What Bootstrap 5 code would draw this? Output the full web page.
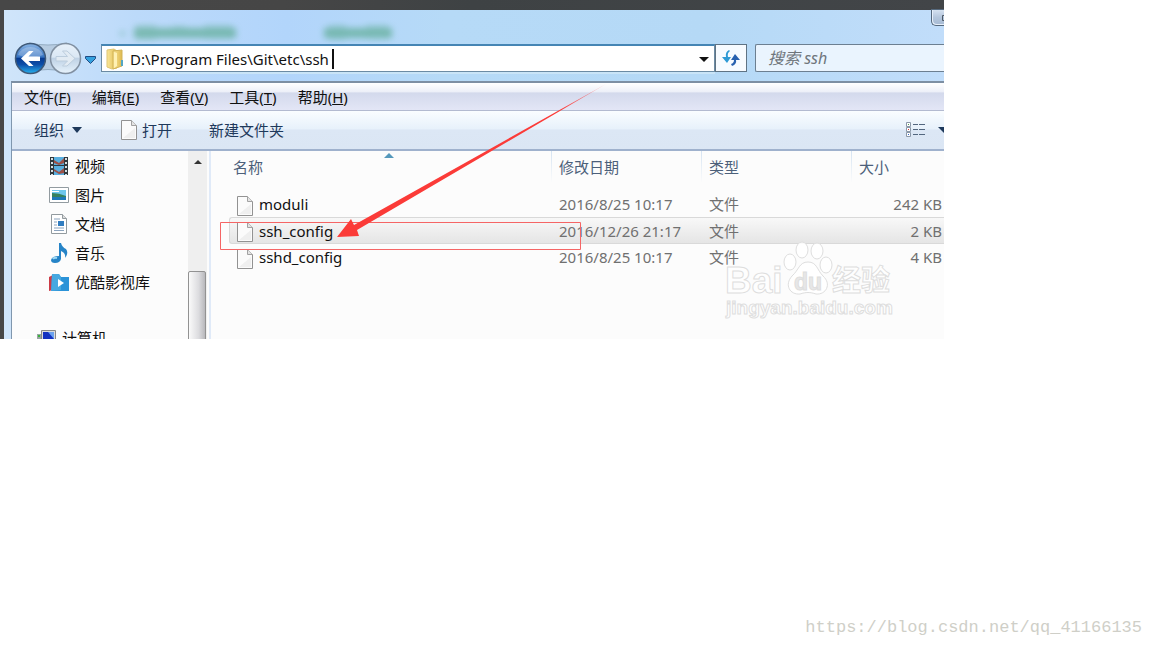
<!DOCTYPE html>
<html lang="zh-CN">
<head>
<meta charset="utf-8">
<meta name="viewport" content="width=device-width, initial-scale=1">
<title>ssh</title>
<link href="https://cdn.jsdelivr.net/npm/bootstrap@5.3.0/dist/css/bootstrap.min.css" rel="stylesheet">
<script src="https://cdn.jsdelivr.net/npm/bootstrap@5.3.0/dist/js/bootstrap.bundle.min.js"></script>
<style>
body{font:15px/22px "Noto Sans","Noto Sans CJK SC",sans-serif;background:#fff;color:#111}
button,input{font:inherit;color:inherit}
.desk{margin-right:208px;padding:10px 0 0 4px;background:linear-gradient(90deg,#474747,#464646 30%,#3e4244 50%,#424548)}
.glass{padding-left:7px;background:linear-gradient(90deg,#d0e5fa,#bcdafa 14%,#b2d5fb 30%,#b6daf7 47%,#b5d9f6 75%,#c1ddfa)}
.titlebar{height:34px}
.ghosttext{left:110px;top:10px}
.captionbtn{right:0;top:-1px;width:13px;height:17px;border:1px solid #56697d;border-right:0;border-radius:0 0 0 5px;background:linear-gradient(#d5e1f0,#b4c6dc 50%,#a6bad4);box-shadow:inset 1px -1px #e6effa}
.plain{border:0;background:none;padding:0;white-space:nowrap}
.history{width:90px;height:28px}
.address{height:28px;border:1px solid #6b8ba4;border-top:2px solid #4585b4;background:#fff;box-shadow:0 2px #c9e4f7}
.address input,.find input{border:0;background:none;outline:0;min-width:0}
.caret{left:230px;top:3px;width:2px;height:20px;background:#111}
.refresh{width:32px;height:28px;border:1px solid #5f7384;background:#f7fbff}
.find{width:189px;height:28px;margin-left:8px;border:1px solid #6c7f91;border-right:0;border-radius:2px 0 0 2px;background:#eaf4fe;font-size:16px}
.find input::placeholder{color:#6e757b;font-style:italic;opacity:1}
.frame{margin-top:9px;border-left:1px solid #8097ae;border-top:2px solid #7d8fa3;background:#fcfcfc}
.menus{height:28px;padding-left:12px;gap:21px;background:linear-gradient(#fff,#eceff8 34%,#d3d9ec 36%,#e3e6f6);border-bottom:1px solid #b3bad0}
.tools{height:40px;padding-left:22px;color:#1e395b;background:linear-gradient(#fafdff,#e7f1fb 47%,#dce7f5 50%,#dbe6f4);border-bottom:2px solid #9fb1cd}
.opener{margin-left:38px}
.newdir{margin-left:37px}
.panes{height:188px}
.tree{width:176px;overflow:hidden}
.tree a{height:29px;color:#111;padding-left:37px;gap:6px;white-space:nowrap}
.tree .root{padding-left:24px;margin-top:27px}
.track{width:19px;background:#efefef}
.thumb{top:120px;bottom:-4px;left:0;right:1px;border:1px solid #929292;border-radius:2px;background:linear-gradient(90deg,#fafafa,#dcdcdf 60%,#b8b8bc)}
.divide{width:4px;border-right:2px solid #e0eaf8}
.listing{padding-left:18px;min-width:0}
.files{width:100%;table-layout:fixed;border-collapse:separate;border-spacing:0;white-space:nowrap;color:#707070}
.files th{height:40px;padding:5px 0 0 8px;vertical-align:top;font-weight:400;color:#4c607a;background:linear-gradient(#d5e3f2,#fcfcfc) left top/1px 32px no-repeat}
.files th:first-child{background:none;padding-left:4px}
.files td{height:26px;padding:0 2px 0 8px;line-height:24px}
.files td:first-child{color:#111;padding-left:7px}
.files td svg{margin-right:5px}
.files .picked td{height:27px;border:solid #d9d9d9;border-width:1px 0;background:linear-gradient(#f8f8f8,#e5e5e5)}
.files .picked td:first-child{border-left-width:1px;border-radius:3px 0 0 3px;padding-left:6px}
.sorted{left:155px;top:1px}
.baidu{right:42px;top:86px}
.notes{left:0;top:0;pointer-events:none}
.credit{right:10px;bottom:9px;font:17px/22px "Liberation Mono",monospace;color:#cfcfc8}
</style>
</head>
<body class="position-relative min-vh-100">
<svg class="position-absolute" width="0" height="0"><defs>
<symbol id="page" viewBox="0 0 18 20"><path d="M1.500.500h10l5 5v14h-15z" fill="#fbfbfb" stroke="#929292"/><path d="M3 18h12V8z" fill="#efefef"/><path d="M11.500.500v5h5" fill="#e4e4e4" stroke="#a2a2a2"/></symbol>
<linearGradient id="orb" x2="0" y2="1"><stop stop-color="#8bb5e4"/><stop offset=".45" stop-color="#3572c1"/><stop offset=".5" stop-color="#073b91"/><stop offset=".7" stop-color="#0d4ea8"/><stop offset="1" stop-color="#27b2ef"/></linearGradient>
<linearGradient id="orb2" x2="0" y2="1"><stop stop-color="#e8f1fa"/><stop offset=".45" stop-color="#dbe8f4"/><stop offset=".5" stop-color="#bfd2e5"/><stop offset="1" stop-color="#e7f3fc"/></linearGradient>
<linearGradient id="fade" gradientUnits="userSpaceOnUse" x1="605" y1="0" x2="560" y2="0"><stop stop-color="#ff3a3a" stop-opacity=".35"/><stop offset="1" stop-color="#fb3b38"/></linearGradient>
<linearGradient id="gold" x2="1"><stop stop-color="#f9e698"/><stop offset="1" stop-color="#dfb94e"/></linearGradient>
</defs></svg>
<main class="desk"><div class="glass position-relative">
  <div class="titlebar">
    <svg class="ghosttext position-absolute" width="290" height="26" aria-hidden="true"><g fill="#5eac94" opacity=".7" style="filter:blur(3px)"><path d="M6 12h5v3H6zM20 8h102v10H20zM210 8h68v10h-68z"/><path d="M22 5h20v15H22zM58 6h14v12H58zM90 5h28v14H90zM215 5h17v15h-17zM252 5h22v14h-22z" opacity=".5"/></g></svg>
    <div class="captionbtn position-absolute"><svg class="d-block" width="12" height="14"><path d="M10.500 5.500h5v5h-5z" fill="none" stroke="#4d5966"/></svg></div>
  </div>
  <div class="d-flex align-items-center">
    <div class="history d-flex align-items-center flex-shrink-0">
      <svg width="90" height="34" viewBox="0 0 90 34" role="img" aria-label="后退 前进"><path d="M18 2q19 4 38 0l12 15-12 14q-19-5-38 0z" fill="#b7cce1" stroke="#94acc2"/><circle cx="19.500" cy="17.500" r="15" fill="url(#orb)" stroke="#3f5978" stroke-width="1.500"/><path d="M7 14a13 11 0 0 1 25 0q-12 5-25 0z" fill="#fff" opacity=".25"/><path d="M10 17.500l8-7.500h4.500l-5 5.500H29v4.500H17.500l5 5H18z" fill="#fff"/><circle cx="54.500" cy="17.500" r="15" fill="url(#orb2)" stroke="#8190a1" stroke-width="1.500"/><path d="M64 17.500l-8-7.500h-4.500l5 5.500H45v4.500h11.500l-5 5H56z" fill="#e2ebf3" stroke="#bccddd"/><path d="M74.500 15.500h10v2l-5 5-5-5z" fill="#33a0de" stroke="#214b83"/></svg>
    </div>
    <div class="address position-relative d-flex align-items-center flex-grow-1">
      <svg width="20" height="22" class="flex-shrink-0 ms-1" viewBox="0 0 20 22"><path d="M1 2l7-1 3 2v17l-5 1-5-2z" fill="url(#gold)" stroke="#dfc575"/><path d="M7 3l9-1v16l-9 3z" fill="url(#gold)" stroke="#d3b458"/><path d="M8 4l3 1v13l-3 2z" fill="#fff1b4"/><path d="M15 12h2v6h-2z" fill="#53a6c4"/></svg>
      <input class="flex-grow-1 p-0 ms-1" aria-label="地址" value="D:\Program Files\Git\etc\ssh">
      <span class="caret position-absolute"></span>
      <button class="plain d-flex me-1" aria-label="历史"><svg width="12" height="8"><path d="M1 2h10L6 7z" fill="#111"/></svg></button>
    </div>
    <button class="refresh p-0 d-flex align-items-center justify-content-center" aria-label="刷新"><svg width="20" height="20"><path d="M8 2Q4 4 5 9H1l5 6 4-6H7Q6 5 9 3z" fill="#2e9ad5"/><path d="M11 18q5-2 4-6h4l-5-6-4 6h3q0 3-3 4z" fill="#2861af"/></svg></button>
    <label class="find d-flex align-items-center flex-shrink-0"><input class="w-100 ps-2 ms-1" aria-label="搜索" placeholder="搜索 ssh"></label>
  </div>
  <div class="frame">
    <nav class="menus d-flex align-items-center">
      <button class="plain">文件(<u>F</u>)</button><button class="plain">编辑(<u>E</u>)</button><button class="plain">查看(<u>V</u>)</button><button class="plain">工具(<u>T</u>)</button><button class="plain">帮助(<u>H</u>)</button>
    </nav>
    <div class="tools d-flex align-items-center">
      <button class="plain d-flex align-items-center gap-2">组织<svg width="10" height="6"><path d="M0 0h10L5 6z" fill="#1e395b"/></svg></button>
      <button class="opener plain d-flex align-items-center gap-1"><svg width="18" height="20"><use href="#page"/></svg>打开</button>
      <button class="newdir plain me-auto">新建文件夹</button>
      <button class="plain d-flex" aria-label="更改视图"><svg width="40" height="18"><g fill="#fff" stroke="#8b98a9"><path d="M2.500 1.500h4v4h-4zM2.500 6.500h4v4h-4zM2.500 11.500h4v4h-4z"/></g><path d="M4 3h1v1H4z" fill="#4b9a4b"/><path d="M4 8h1v1H4z" fill="#d33"/><path d="M4 13h1v1H4z" fill="#36c"/><path d="M9 3.500h5m1 0h6M9 8.500h5m1 0h6M9 13.500h5m1 0h6" stroke="#53677f"/><path d="M34 6h12l-6 6z" fill="#1e395b"/></svg></button>
    </div>
    <div class="panes d-flex overflow-hidden">
      <nav class="tree flex-shrink-0">
        <a href="#" class="d-flex align-items-center text-decoration-none"><svg width="20" height="20"><path d="M1 1h18v18H1z" fill="#30383d"/><path d="M5 1h10v8H5zM5 10h10v9H5z" fill="#58afe0"/><path d="M5 4l5 3 5-5v5l-5 2-5-2zM5 13l5 3 5-4v5l-5 1-5-3z" fill="#9c5148"/><path d="M3 2v17M17 2v17" stroke="#d5e0e5" stroke-width="2" stroke-dasharray="2 2"/></svg>视频</a>
        <a href="#" class="d-flex align-items-center text-decoration-none"><svg width="20" height="20"><path d="M.5 2.500h19v15H.5z" fill="#fff" stroke="#929ba0"/><path d="M3 5h14v10H3z" fill="#6cc6ec"/><path d="M3 8q7 0 14 3v1H3z" fill="#35805d"/><path d="M3 12h14v3H3z" fill="#1c78b7"/><path d="M3 6h7v1H3z" fill="#fff"/></svg>图片</a>
        <a href="#" class="d-flex align-items-center text-decoration-none"><svg width="20" height="20"><path d="M2.500.500h11l4 4v15h-15z" fill="#fff" stroke="#939b9f"/><path d="M13.500.500v4h4" fill="#ddd" stroke="#939b9f"/><path d="M5 5h6M5 8h3M5 11h3M5 14h10M5 16.500h10" stroke="#8ba3bd"/><path d="M9 7h6v5H9z" fill="#317dc0"/></svg>文档</a>
        <a href="#" class="d-flex align-items-center text-decoration-none"><svg width="20" height="20"><path d="M10 0h2q1 4 5 6 3 4-1 9 1-5-4-7v8q-1 4-6 4-4 0-4-3 1-4 8-4z" fill="#2684c7"/><path d="M4 16q1-2 4-1" stroke="#9dd9f5" stroke-width="2" fill="none"/></svg>音乐</a>
        <a href="#" class="d-flex align-items-center text-decoration-none"><svg width="20" height="20"><path d="M0 5l4-2v15l-4 1z" fill="#cc3b46"/><path d="M3 2h7l2 3h8v14H2z" fill="#2b93d8"/><path d="M3 2h7l2 3v13l-10 1z" fill="#59b5e6" opacity=".6"/><path d="M9 7v8l6-4z" fill="#fff"/></svg>优酷影视库</a>
        <a href="#" class="root d-flex align-items-center text-decoration-none"><svg width="20" height="20"><path d="M5.500 2.500h14v12h-14z" fill="#ddd" stroke="#888"/><path d="M7 4h11v9H7z" fill="#1532c0"/><path d="M12 4h6v7z" fill="#6ca2ef"/><path d="M1 6h4v12H1z" fill="#9aa6a4"/><path d="M2 7h2v2H2z" fill="#39b13c"/></svg>计算机</a>
      </nav>
      <div class="track position-relative flex-shrink-0"><svg class="d-block mx-auto" width="10" height="16"><path d="M1 13l4-4 4 4z" fill="#333"/></svg><span class="thumb position-absolute"></span></div>
      <div class="divide flex-shrink-0"></div>
      <section class="listing position-relative flex-grow-1">
        <table class="files">
          <colgroup><col><col style="width:150px"><col style="width:150px"><col style="width:93px"></colgroup>
          <thead><tr><th class="position-relative">名称<svg class="sorted position-absolute" width="10" height="6"><path d="M0 6l5-5 5 5z" fill="#5598bb"/></svg></th><th>修改日期</th><th>类型</th><th>大小</th></tr></thead>
          <tbody>
            <tr><td><svg width="18" height="20"><use href="#page"/></svg>moduli</td><td>2016/8/25 10:17</td><td>文件</td><td class="text-end">242 KB</td></tr>
            <tr class="picked"><td><svg width="18" height="20"><use href="#page"/></svg>ssh_config</td><td>2016/12/26 21:17</td><td>文件</td><td class="text-end">2 KB</td></tr>
            <tr><td><svg width="18" height="20"><use href="#page"/></svg>sshd_config</td><td>2016/8/25 10:17</td><td>文件</td><td class="text-end">4 KB</td></tr>
          </tbody>
        </table>
        <svg class="baidu position-absolute" width="180" height="88" viewBox="0 0 180 88"><g fill="#fff" fill-opacity=".85" stroke="#dedede" font-family="Liberation Sans,Noto Sans CJK SC,sans-serif" font-weight="700"><text x="3" y="56" font-size="37">Bai</text><ellipse cx="68" cy="25" rx="6" ry="8"/><ellipse cx="80" cy="13" rx="6" ry="8"/><ellipse cx="95" cy="14" rx="6" ry="8"/><ellipse cx="104" cy="28" rx="6" ry="8"/><path d="M86 25c9 0 9 8 15 14 9 8 3 19-7 18-6-2-10-2-16 0-10 1-16-9-8-18 7-6 7-14 16-14z"/><text x="72" y="53" font-size="23" fill="#e3e3e3">du</text><text x="110" y="54" font-size="29">经验</text><text x="4" y="77" font-size="19">jingyan.baidu.com</text></g></svg>
      </section>
    </div>
  </div>
  <svg class="notes position-absolute" width="620" height="250" viewBox="4 10 620 250" aria-hidden="true"><path d="M220.500 222.500h360v27h-360z" fill="none" stroke="#f56565"/><path d="M337 237l14-18 3 6L606 84 357 230l2 6z" fill="url(#fade)"/></svg>
</div></main>
<div class="credit position-absolute">https://blog.csdn.net/qq_41166135</div>
</body>
</html>
